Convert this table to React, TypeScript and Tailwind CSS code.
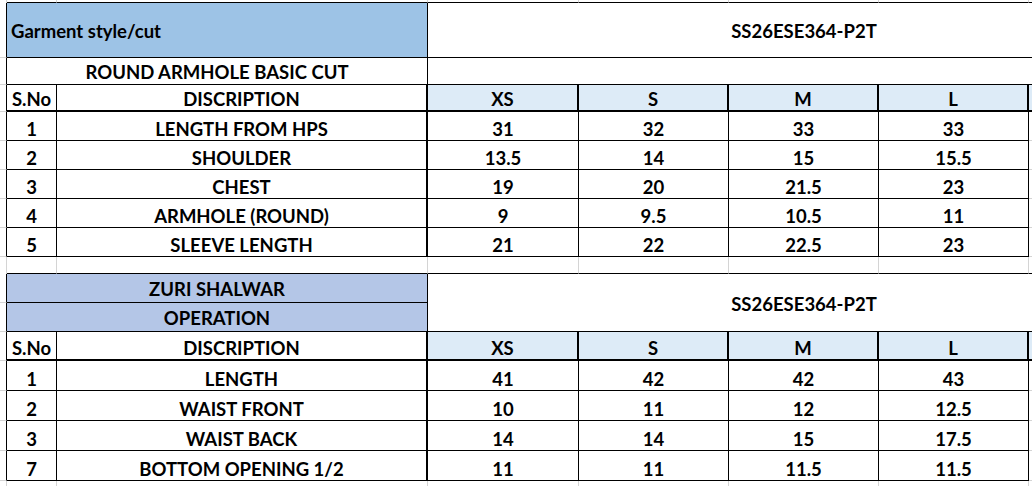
import React from 'react';

// size chart sheet, two blocks sharing the same column grid
type RowProps = { h: string; n: string; label: string; vals: string[] };

const sizes = ['XS', 'S', 'M', 'L'];

const topRows = [
  { n: '1', label: 'LENGTH FROM HPS', vals: ['31', '32', '33', '33'] },
  { n: '2', label: 'SHOULDER', vals: ['13.5', '14', '15', '15.5'] },
  { n: '3', label: 'CHEST', vals: ['19', '20', '21.5', '23'] },
  { n: '4', label: 'ARMHOLE (ROUND)', vals: ['9', '9.5', '10.5', '11'] },
  { n: '5', label: 'SLEEVE LENGTH', vals: ['21', '22', '22.5', '23'] },
];

const shalwarRows = [
  { n: '1', label: 'LENGTH', vals: ['41', '42', '42', '43'] },
  { n: '2', label: 'WAIST FRONT', vals: ['10', '11', '12', '12.5'] },
  { n: '3', label: 'WAIST BACK', vals: ['14', '14', '15', '17.5'] },
  { n: '7', label: 'BOTTOM OPENING 1/2', vals: ['11', '11', '11.5', '11.5'] },
];

const valWidths = ['w-[151px]', 'w-[150px]', 'w-[150px]', 'w-[150px]'];

function DataRow({ h, n, label, vals }: RowProps) {
  return (
    <div className={`flex ${h}`}>
      <div className="w-[7px] shrink-0 border-r border-b border-r-black border-b-[#d4d4d4]" />
      <div className="w-[50px] shrink-0 border-r border-b border-black flex items-end justify-center">
        {n}
      </div>
      <div className="w-[371px] shrink-0 border-r-2 border-b border-black flex items-end justify-center">
        {label}
      </div>
      {vals.map((v, i) => (
        <div
          key={i}
          className={`${valWidths[i]} shrink-0 border-r border-b border-black flex items-end justify-center`}
        >
          {v}
        </div>
      ))}
      <div className="flex-1 border-b border-[#d4d4d4]" />
    </div>
  );
}

function HeaderRow({ h }: { h: string }) {
  return (
    <div className={`flex ${h}`}>
      <div className="w-[7px] shrink-0 border-r border-b border-r-black border-b-[#d4d4d4]" />
      <div className="w-[50px] shrink-0 border-r border-b-2 border-black flex items-end justify-center">
        S.No
      </div>
      <div className="w-[371px] shrink-0 border-r-2 border-b-2 border-black flex items-end justify-center">
        DISCRIPTION
      </div>
      {sizes.map((s, i) => (
        <div
          key={s}
          className={`${valWidths[i]} shrink-0 bg-[#ddebf7] border-r-2 border-b-2 border-black flex items-end justify-center`}
        >
          {s}
        </div>
      ))}
      <div className="flex-1 bg-[#ddebf7] border-b-2 border-black" />
    </div>
  );
}

// light excel gridlines for the rows outside the tables
function GridStrip({ h, bottom }: { h: string; bottom: boolean }) {
  const b = bottom ? 'border-b border-b-black' : '';
  return (
    <div className={`flex ${h}`}>
      <div className="w-[7px] shrink-0 border-r border-[#d4d4d4]" />
      <div className={`w-[50px] shrink-0 border-r border-r-[#d4d4d4] ${b}`} />
      <div className={`w-[371px] shrink-0 border-r border-r-[#d4d4d4] ${b}`} />
      {valWidths.map((w, i) => (
        <div key={i} className={`${w} shrink-0 border-r border-r-[#d4d4d4] ${b}`} />
      ))}
      <div className={`flex-1 ${b}`} />
    </div>
  );
}

export default function App() {
  return (
    <div className="w-[1032px] h-[486px] overflow-hidden bg-white text-black font-['Lato',sans-serif] font-bold text-[18.5px] leading-[22px]">
      <GridStrip h="h-[3px]" bottom />

      {/* style block */}
      <div className="flex h-[55px]">
        <div className="w-[7px] shrink-0 border-r border-b border-r-black border-b-[#d4d4d4]" />
        <div className="w-[421px] shrink-0 bg-[#9dc3e6] border-r border-b border-black flex items-center pl-[4px] pt-[2px]">
          Garment style/cut
        </div>
        <div className="flex-1 flex overflow-hidden border-b border-black">
          <div className="w-[752px] shrink-0 flex items-center justify-center pt-[2px]">SS26ESE364-P2T</div>
        </div>
      </div>
      <div className="flex h-[27px]">
        <div className="w-[7px] shrink-0 border-r border-b border-r-black border-b-[#d4d4d4]" />
        <div className="w-[421px] shrink-0 border-r border-b border-black flex items-center justify-center pt-[2px]">
          ROUND ARMHOLE BASIC CUT
        </div>
        <div className="flex-1 border-b border-black" />
      </div>
      <HeaderRow h="h-[27px]" />
      {topRows.map((r) => (
        <DataRow key={r.label} h="h-[29px]" {...r} />
      ))}

      <GridStrip h="h-[17px]" bottom />

      {/* shalwar block */}
      <div className="flex h-[58px]">
        <div className="w-[7px] shrink-0 flex flex-col">
          <div className="h-[29px] border-r border-b border-r-black border-b-[#d4d4d4]" />
          <div className="h-[29px] border-r border-b border-r-black border-b-[#d4d4d4]" />
        </div>
        <div className="w-[421px] shrink-0 flex flex-col">
          <div className="h-[29px] bg-[#b4c6e7] border-r border-b border-black flex items-center justify-center pt-px">
            ZURI SHALWAR
          </div>
          <div className="h-[29px] bg-[#b4c6e7] border-r border-b border-black flex items-center justify-center pt-px">
            OPERATION
          </div>
        </div>
        <div className="flex-1 flex overflow-hidden border-b border-black">
          <div className="w-[752px] shrink-0 flex items-center justify-center pt-[3px]">SS26ESE364-P2T</div>
        </div>
      </div>
      <HeaderRow h="h-[29px]" />
      {shalwarRows.map((r) => (
        <DataRow key={r.label} h="h-[30px]" {...r} />
      ))}

      <GridStrip h="h-[5px]" bottom={false} />
    </div>
  );
}
